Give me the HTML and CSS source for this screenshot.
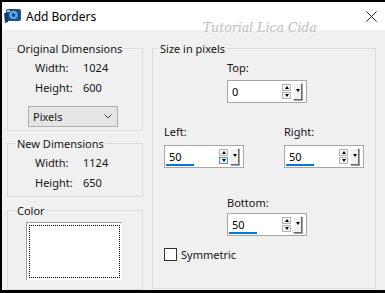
FILE: index.html
```html
<!DOCTYPE html>
<html lang="en">
<head>
    <meta charset="UTF-8">
    <title>Add Borders</title>
    <link rel="stylesheet" href="styles.css">
</head>
<body>
<div class="window">
    <div class="titlebar">
        <svg class="app-icon" width="18" height="16" viewBox="0 0 18 16">
            <rect x="3" y="1" width="15" height="12" rx="2" fill="#1f4f86"/>
            <path d="M1 5 L5 5 L5 14 L2 15 Z" fill="#123a66"/>
            <circle cx="10.5" cy="7" r="4" fill="#5fb6e6"/>
            <circle cx="10.5" cy="7" r="2" fill="#1f4f86"/>
            <rect x="4" y="2" width="3" height="2" fill="#8fd0f4"/>
        </svg>
        <span class="title">Add Borders</span>
        <svg class="close" width="11" height="11" viewBox="0 0 11 11">
            <path d="M0.5 0.5 L10.5 10.5 M10.5 0.5 L0.5 10.5" stroke="#222" stroke-width="1"/>
        </svg>
    </div>
    <div class="watermark">Tutorial Lica Cida</div>

    <div class="content">
        <div class="left-col">
            <fieldset class="group orig">
                <legend>Original Dimensions</legend>
                <div class="dim-grid">
                    <span>Width:</span><span>1024</span>
                    <span>Height:</span><span>600</span>
                </div>
                <div class="select">
                    <span>Pixels</span>
                    <svg width="8" height="5" viewBox="0 0 8 5"><path d="M0.5 0.5 L4 4 L7.5 0.5" fill="none" stroke="#444"/></svg>
                </div>
            </fieldset>

            <fieldset class="group newdims">
                <legend>New Dimensions</legend>
                <div class="dim-grid">
                    <span>Width:</span><span>1124</span>
                    <span>Height:</span><span>650</span>
                </div>
            </fieldset>

            <fieldset class="group color">
                <legend>Color</legend>
                <div class="swatch"><div class="focus"></div></div>
            </fieldset>
        </div>

        <fieldset class="group size">
            <legend>Size in pixels</legend>

            <div class="field center">
                <div class="lbl">Top:</div>
                <div class="spin">
                    <div class="val"><span class="num">0</span></div>
                    <div class="arrows"><span class="up"></span><span class="down"></span></div>
                    <div class="drop"></div>
                </div>
            </div>

            <div class="lr">
                <div class="field">
                    <div class="lbl">Left:</div>
                    <div class="spin">
                        <div class="val"><span class="num">50</span><span class="bar"></span></div>
                        <div class="arrows"><span class="up"></span><span class="down hot"></span></div>
                        <div class="drop"></div>
                    </div>
                </div>
                <div class="field">
                    <div class="lbl">Right:</div>
                    <div class="spin">
                        <div class="val"><span class="num">50</span><span class="bar"></span></div>
                        <div class="arrows"><span class="up"></span><span class="down"></span></div>
                        <div class="drop"></div>
                    </div>
                </div>
            </div>

            <div class="field center bottom">
                <div class="lbl">Bottom:</div>
                <div class="spin">
                    <div class="val"><span class="num">50</span><span class="bar"></span></div>
                    <div class="arrows"><span class="up"></span><span class="down"></span></div>
                    <div class="drop"></div>
                </div>
            </div>

            <label class="check"><span class="box"></span>Symmetric</label>
        </fieldset>
    </div>
</div>
</body>
</html>
```

FILE: styles.css
```css
* {
    box-sizing: border-box;
}
body {
    margin: 0;
    background: #000;
    font-family: "Noto Sans", "DejaVu Sans", sans-serif;
    font-size: 11px;
    color: #141414;
}
.window {
    position: relative;
    width: 385px;
    height: 293px;
    border-top: 2px solid #000;
    border-left: 2px solid #000;
    border-bottom: 3px solid #000;
    background: #f0f0f0;
    overflow: hidden;
}

/* title bar */
.titlebar {
    height: 28px;
    background: #fff;
    display: flex;
    align-items: center;
    padding-left: 1px;
}
.app-icon {
    flex: none;
}
.title {
    margin-left: 5px;
    font-size: 12px;
    color: #000;
}
.close {
    margin-left: auto;
    margin-right: 8px;
}
.watermark {
    position: absolute;
    left: 201px;
    top: 18px;
    font-family: "DejaVu Serif", serif;
    font-style: italic;
    font-size: 12.5px;
    color: #c2c2c2;
    text-shadow: 1px 1px 0 #fff, -1px 0 0 #ebebeb;
}

/* layout */
.content {
    display: flex;
    height: 260px;
    padding: 0 9px 0 5px;
    gap: 9px;
}
.left-col {
    width: 136px;
    display: flex;
    flex-direction: column;
}
.group {
    margin: 0;
    border: 1px solid #dcdcdc;
    padding: 0 6px 0 8px;
    min-width: 0;
}
.group legend {
    padding: 0 1px;
    line-height: 15px;
}

.orig {
    margin-top: 11px;
    padding-bottom: 3px;
}
.newdims {
    margin-top: 5px;
    padding-bottom: 6px;
}
.color {
    margin-top: 6px;
    flex: 1;
    padding-bottom: 6px;
}

.dim-grid {
    display: grid;
    grid-template-columns: 48px auto;
    row-gap: 5px;
    margin: 4px 0 0 19px;
    line-height: 15px;
}
.select {
    display: flex;
    align-items: center;
    justify-content: space-between;
    width: 90px;
    height: 21px;
    margin: 11px 0 0 12px;
    padding: 0 5px 0 4px;
    background: #e5e5e5;
    border: 1px solid #adadad;
}

.swatch {
    width: 96px;
    height: 58px;
    margin: 4px 0 0 10px;
    background: #fff;
    border-top: 1px solid #a0a0a0;
    border-left: 1px solid #a0a0a0;
    padding: 2px;
}
.focus {
    height: 100%;
    border: 1px dotted #000;
}

/* size in pixels */
.size {
    flex: 1;
    margin: 11px 0 1px 0;
    padding: 0 6px 0 6px;
}
.field {
    width: 80px;
}
.field.center {
    margin-left: 68px;
}
.lbl {
    line-height: 15px;
    margin-top: 4px;
    margin-bottom: 5px;
}
.lr {
    display: flex;
    gap: 40px;
    margin: 17px 0 0 5px;
}
.lr .lbl {
    margin-bottom: 6px;
}
.bottom {
    margin-top: 27px;
}
.bottom .lbl {
    margin-bottom: 3px;
}

.spin {
    display: flex;
    align-items: center;
    height: 23px;
    background: #fff;
    border: 1px solid #a7a7a7;
    padding-right: 4px;
}
.val {
    flex: 1;
    align-self: stretch;
    display: flex;
    flex-direction: column;
}
.num {
    line-height: 15px;
    padding: 3px 0 0 4px;
    color: #000;
}
.bar {
    width: 28px;
    height: 3px;
    margin: auto 0 1px 1px;
    background: #0078d7;
}
.arrows {
    display: flex;
    flex-direction: column;
    gap: 1px;
    width: 9px;
}
.arrows span {
    height: 7px;
    border: 1px solid #b4b4b4;
    background: #f4f4f4;
    display: flex;
    align-items: center;
    justify-content: center;
}
.arrows span::after {
    content: "";
    border-left: 2px solid transparent;
    border-right: 2px solid transparent;
}
.arrows .up::after {
    border-bottom: 3px solid #000;
}
.arrows .down::after {
    border-top: 3px solid #000;
}
.arrows .hot {
    border-color: #3c9be4;
    background: #e5f1fb;
}
.drop {
    width: 9px;
    height: 17px;
    margin-left: 2px;
    background: #f0f0f0;
    border-top: 1px solid #fff;
    border-left: 1px solid #fff;
    border-right: 1px solid #6a6a6a;
    border-bottom: 1px solid #6a6a6a;
    box-shadow: 1px 1px 0 #a0a0a0;
    display: flex;
    justify-content: center;
    padding-top: 5px;
}
.drop::after {
    content: "";
    height: 0;
    border-left: 2px solid transparent;
    border-right: 2px solid transparent;
    border-top: 3px solid #000;
}

.check {
    display: flex;
    align-items: center;
    gap: 4px;
    margin: 11px 0 0 5px;
    line-height: 15px;
}
.check .box {
    width: 13px;
    height: 13px;
    background: #fff;
    border: 1px solid #333;
}
```
